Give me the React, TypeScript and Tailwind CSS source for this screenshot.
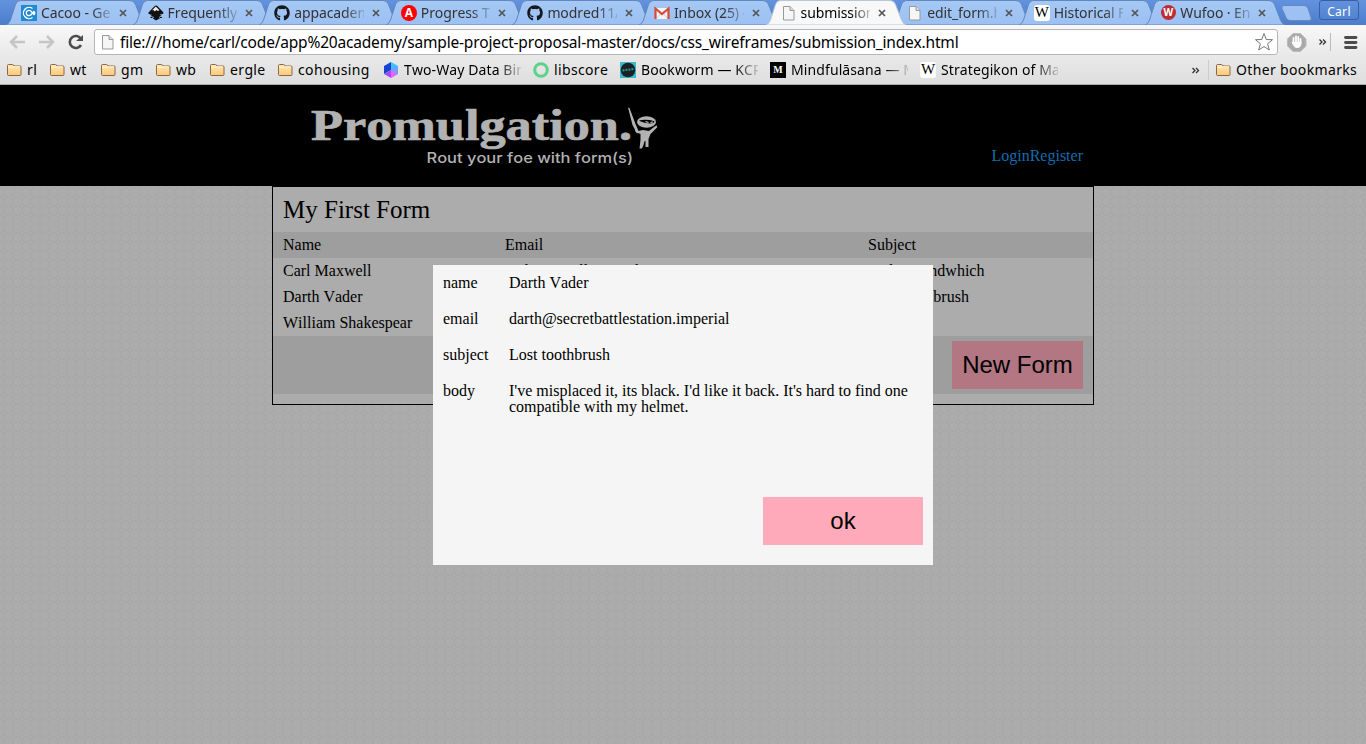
import React from "react";
import { FaGithub } from "react-icons/fa";

function Page({ s = 16 }: { s?: number }) {
  return (
    <svg width={s} height={s} viewBox="0 0 16 16" className="shrink-0">
      <path d="M2.5 1.5h6.500l4 4v9.500h-10.500z" fill="#f6f6f6" stroke="#999" />
      <path d="M9 1.500v4h4" fill="#ddd" stroke="#999" />
    </svg>
  );
}

function Folder() {
  return (
    <svg width="16" height="14" viewBox="0 0 16 14" className="shrink-0">
      <defs>
        <linearGradient id="fold" x1="0" y1="0" x2="0" y2="1">
          <stop offset="0" stopColor="#ffe9b8" />
          <stop offset="1" stopColor="#fbc877" />
        </linearGradient>
      </defs>
      <path d="M1.500 2.500q0-1 1-1h4q1 0 1.500 1.500h6q1 0 1 1v7.500q0 1-1 1h-11.500q-1 0-1-1z" fill="url(#fold)" stroke="#8f6644" />
      <path d="M2 4.500h5l1-.8h6" stroke="#fff3d2" fill="none" />
    </svg>
  );
}

function Wiki() {
  return (
    <span className="flex h-4 w-4 shrink-0 items-center justify-center rounded-[3px] bg-white font-['Liberation_Serif',serif] text-[15px] leading-none tracking-normal text-black">W</span>
  );
}

function Cacoo() {
  return (
    <svg width="16" height="16" viewBox="0 0 16 16">
      <path fill="#2189d0" d="M0 0h16v16H0z" />
      <path d="M11.500 3.600A5.600 5.600 0 1 0 11.500 12.400" fill="none" stroke="#fff" strokeWidth="1.300" />
      <path d="M10 6.200A2.700 2.700 0 1 0 10 9.800L13 6.500q1.500 1.500 0 3L10 6.200" fill="none" stroke="#fff" strokeWidth="1.300" />
    </svg>
  );
}

function Inkscape() {
  return (
    <svg width="16" height="16" viewBox="0 0 16 16">
      <path d="M8 .5Q9 .5 10 1.700L15 7q1.200 1.400-.5 2l-3 .8 2 1-2.500 1.200 1 1.200L8 15.500l-3-2 1-1.500-3.500-1 1.500-1L1 9Q-.2 8.300 1 7l5-5.300Q7 .5 8 .5z" fill="#111" />
      <path d="M7.800 1.500l3.600 3.800-1.400.7-1.600-1-1.500 1.500L5.500 5 4 5.500z" fill="#eee" />
      <path d="M2.500 12.500h2M12 12.500h2" stroke="#111" />
    </svg>
  );
}

function Gmail() {
  return (
    <svg width="16" height="16" viewBox="0 0 16 16">
      <path d="M1 3h14v11H1z" fill="#f4f4f4" />
      <path d="M3 13l4-5M13 13L9 8" stroke="#ccc" />
      <path d="M1.500 14V3.500L8 9l6.500-5.500V14" fill="none" stroke="#d64a3c" strokeWidth="2.200" />
    </svg>
  );
}

function Disc({ wufoo = false }: { wufoo?: boolean }) {
  return (
    <span className={wufoo ? "flex h-[15px] w-[15px] items-center justify-center rounded-full bg-[#bd2d32] font-['Open_Sans',sans-serif] text-[10px] font-bold tracking-normal text-white" : "flex h-4 w-4 items-center justify-center rounded-full bg-[#f00] font-['Open_Sans',sans-serif] text-[12px] font-bold tracking-normal text-white"}>
      {wufoo ? "W" : "A"}
    </span>
  );
}

const cat = <FaGithub className="h-4 w-4 text-[#16191c]" />;

const tabs: { icon: React.ReactNode; label: string; active?: boolean }[] = [
  { icon: <Cacoo />, label: "Cacoo - Gel" },
  { icon: <Inkscape />, label: "Frequently" },
  { icon: cat, label: "appacadem" },
  { icon: <Disc />, label: "Progress Tr" },
  { icon: cat, label: "modred11/" },
  { icon: <Gmail />, label: "Inbox (25) -" },
  { icon: <Page />, label: "submission", active: true },
  { icon: <Page />, label: "edit_form.h" },
  { icon: <Wiki />, label: "Historical F" },
  { icon: <Disc wufoo />, label: "Wufoo · En" },
];

function Tab({ icon, label, active }: { icon: React.ReactNode; label: string; active?: boolean }) {
  return (
    <div className={active ? "relative z-10 h-[25px] w-[126.600px] shrink-0" : "relative h-[25px] w-[126.600px] shrink-0"}>
      <svg width="144" height="25" className="absolute left-[6px] top-0">
        <defs>
          <linearGradient id="tabBlue" x1="0" y1="0" x2="0" y2="1">
            <stop offset="0" stopColor="#a5c8f5" />
            <stop offset="1" stopColor="#9bc0f2" />
          </linearGradient>
        </defs>
        <path
          d="M0 25Q3 24 4.500 20L9.500 4.500Q11 .5 14.500 .5H124Q128 .5 129.500 4.500L135.500 20Q137 24 140 25z"
          fill={active ? "#f8f8f8" : "url(#tabBlue)"}
          stroke={active ? "#b9c6da" : "#6287bd"}
          strokeWidth="1"
        />
      </svg>
      <div className="relative flex h-[25px] items-center pl-[21px]">
        <span className="flex w-4 shrink-0 justify-center">{icon}</span>
        <span className={active ? "ml-1 w-[72px] overflow-hidden whitespace-nowrap text-[14px] tracking-[-0.1px] text-black [mask-image:linear-gradient(to_right,black_72%,rgba(0,0,0,0.2))]" : "ml-1 w-[72px] overflow-hidden whitespace-nowrap text-[14px] tracking-[-0.1px] text-[#333] [mask-image:linear-gradient(to_right,black_72%,rgba(0,0,0,0.2))]"}>{label}</span>
        <svg width="8" height="8" viewBox="0 0 8 8" className="ml-[8px] shrink-0">
          <path d="M1 1l6 6M7 1L1 7" stroke="#555" strokeWidth="1.700" />
        </svg>
      </div>
    </div>
  );
}

function Mark({ icon, label, w, fade }: { icon: React.ReactNode; label: string; w: string; fade?: boolean }) {
  return (
    <div className={"flex shrink-0 items-center " + w}>
      <span className="flex w-4 shrink-0 justify-center">{icon}</span>
      <span className={fade ? "ml-[5px] w-[117px] overflow-hidden whitespace-nowrap tracking-[0.1px] [mask-image:linear-gradient(to_right,black_80%,rgba(0,0,0,0.15))]" : "ml-[5px] whitespace-nowrap tracking-[0.35px]"}>{label}</span>
    </div>
  );
}

function Ninja() {
  return (
    <svg width="32" height="42" viewBox="0 0 32 42" fill="#b2b2b2">
      <path d="M.5.500L2 1 8 17l3.500 8-2 1.500L5 18z" />
      <ellipse cx="19" cy="15" rx="9.500" ry="5.800" />
      <path d="M12 13.200q8-1 15 1l-1 1.900q-7 1.200-14-2z" fill="#000" />
      <path d="M18 14.500l3 1M23 15.500l2.500-.5" stroke="#ccc" strokeWidth="1.100" />
      <path d="M7.500 22l3 2 5-1 6 1 5-4 2.500-1.800 .8 2L23 27l-2 5v8h-3v-6l-1 .2-1 3.800-1.500 3.500H12l1-8.500v-6l-5-2z" />
    </svg>
  );
}

function Browser() {
  return (
    <header className="h-[85px] font-['Noto_Sans',sans-serif] text-[14px] text-black">
      <div className="flex h-[25px] bg-linear-to-b from-[#6393de] to-[#4c7dcd] pr-[7px]">
        {tabs.map((t) => <Tab key={t.label} {...t} />)}
        <svg width="33" height="25" className="ml-[14px] shrink-0">
          <path d="M2 8.500q-1-3 2-3h20q3 0 4 3l3 9q1 3-2 3H10q-3 0-4-3z" fill="#9dc1f2" stroke="#6589c0" />
        </svg>
        <span className="ml-auto flex h-[20px] w-[40px] items-center justify-center rounded-[3px] border border-[#395f9f] pt-[3px] text-[12px] tracking-[0.3px] text-white">Carl</span>
      </div>
      <div className="flex h-[31px] items-center bg-linear-to-b from-[#f8f8f8] to-[#e9e9e9] pt-[3px]">
        <svg width="94" height="28" className="shrink-0">
          <path d="M25 14H11M17 8l-6 6 6 6M39 14h14M47 8l6 6-6 6" fill="none" stroke="#c5c5c5" strokeWidth="2.500" />
          <path d="M81 11A6 6 0 1 0 81 17" fill="none" stroke="#4d4d4d" strokeWidth="2.600" />
          <path d="M83 7v6h-7z" fill="#4d4d4d" />
        </svg>
        <div className="flex h-[26px] w-[1184px] items-center rounded-[3px] border border-[#b5b5b5] bg-white pl-[5px] pr-[4px]">
          <Page />
          <span className="ml-[4px] whitespace-nowrap pt-[1px] text-[15.500px] tracking-[-0.190px]">file:///home/carl/code/app%20academy/sample-project-proposal-master/docs/css_wireframes/submission_index.html</span>
          <svg width="18" height="18" viewBox="0 0 18 18" className="ml-auto shrink-0"><path d="M9 .5l2.200 6 6.300.2-4.900 4 1.700 6.300L9 13.500 3.700 17l1.700-6.300-4.900-4 6.300-.2z" fill="none" stroke="#777" /></svg>
        </div>
        <svg width="88" height="28" className="shrink-0">
          <path d="M15 5.500h7.500l5.500 5.500v7l-5.500 5.500H15L9.500 18v-7z" fill="#aaa" stroke="#bbb" />
          <path d="M15.500 15v-5M18 14V8.500M20.300 14V9M22.500 15v-4" stroke="#fff" strokeWidth="1.800" strokeLinecap="round" />
          <path d="M13.500 14H23.500q0 6-4.500 6-3 0-5.500-6z" fill="#fff" />
          <path d="M41.500 11.500l2.500 2.500-2.500 2.500M45 11.500l2.500 2.500-2.500 2.500" fill="none" stroke="#333" strokeWidth="1.300" />
          <path d="M52.500 5v18" stroke="#bbb" />
          <path d="M67.500 9.500h10.500M67.500 14.500h10.500M67.500 19.500h10.500" stroke="#4c4c4c" strokeWidth="2.800" strokeLinecap="round" />
        </svg>
      </div>
      <div className="flex h-[29px] items-center border-b border-[#aaa] bg-linear-to-b from-[#e9e9e9] to-[#dedede] pb-[1px] pl-[6px]">
        <Mark icon={<Folder />} label="rl" w="w-[43px]" />
        <Mark icon={<Folder />} label="wt" w="w-[51px]" />
        <Mark icon={<Folder />} label="gm" w="w-[55px]" />
        <Mark icon={<Folder />} label="wb" w="w-[54px]" />
        <Mark icon={<Folder />} label="ergle" w="w-[68px]" />
        <Mark icon={<Folder />} label="cohousing" w="w-[106px]" />
        <Mark icon={<svg width="16" height="16"><defs><linearGradient id="cube" x1="0" y1="0" x2="0" y2="1"><stop offset="0" stopColor="#18d6ff" /><stop offset="1" stopColor="#c86bff" /></linearGradient></defs><path d="M8 0l7 4v8l-7 4z" fill="url(#cube)" /><path d="M8 0v8l-7 4V4z" fill="#1644cf" /><path d="M1 12l7-4v8z" fill="#a04bf5" /><path d="M8 8l5 5-5 3z" fill="#f65cff" /></svg>} label="Two-Way Data Bind" w="w-[150px]" fade />
        <Mark icon={<svg width="16" height="16"><circle cx="8" cy="8" r="6.300" fill="none" stroke="#5bd28a" strokeWidth="3" /></svg>} label="libscore" w="w-[87px]" />
        <Mark icon={<svg width="16" height="16"><path fill="#3db9cc" d="M0 0h16v16H0z" /><circle cx="8" cy="8" r="7.300" fill="#182326" /><path d="M2.500 8.500l11-1.500" stroke="#3a8f96" strokeWidth="2" strokeDasharray="2 1" /></svg>} label="Bookworm — KCRW" w="w-[150px]" fade />
        <Mark icon={<span className="flex h-4 w-4 items-center justify-center bg-black font-['Liberation_Serif',serif] text-[10px] font-bold text-white">M</span>} label="Mindfulāsana — M" w="w-[150px]" fade />
        <Mark icon={<Wiki />} label="Strategikon of Maurice" w="w-[150px]" fade />
        <svg width="24" height="28" className="ml-auto shrink-0"><path d="M1.500 12l2.500 2.500-2.500 2.500M5 12l2.500 2.500-2.500 2.500" fill="none" stroke="#333" strokeWidth="1.300" /><path d="M17.500 4v20" stroke="#ccc" /></svg>
        <Mark icon={<Folder />} label="Other bookmarks" w="w-[151px]" />
      </div>
    </header>
  );
}

const row = "grid h-[26px] grid-cols-[222px_363px_1fr] items-center pl-[10px]";

export default function App() {
  return (
    <div className="h-[744px] w-[1366px] overflow-hidden bg-[#acacac] font-['Liberation_Serif',serif] text-base text-black [font-kerning:none]">
      <Browser />
      <div className="flex h-[101px] justify-between bg-black pl-[310px] pr-[283px]">
        <svg width="360" height="101" className="shrink-0">
          <text x="1" y="54.500" textLength="321" lengthAdjust="spacingAndGlyphs" fill="#b2b2b2" stroke="#b2b2b2" strokeWidth="0.7" className="font-['Liberation_Serif',serif] text-[44px] font-bold">Promulgation.</text>
          <g transform="translate(317.500 22)"><Ninja /></g>
          <text x="116.500" y="78" textLength="206.500" lengthAdjust="spacingAndGlyphs" fill="#b2b2b2" className="font-['Inter',sans-serif] text-[14.500px] font-medium">Rout your foe with form(s)</text>
        </svg>
        <nav className="mt-[59px] flex text-[#126cae]"><a>Login</a><a>Register</a></nav>
      </div>
      <main className="h-[558px] bg-[radial-gradient(circle,#a8a8a8_0.500px,transparent_1px,transparent_3.800px,#a8a8a8_4.200px,#a8a8a8_4.700px,transparent_5.200px)] bg-[length:9px_9px] bg-[position:4px_2px]">
        <section className="mx-auto h-[219px] w-[822px] border border-black bg-[#acacac]">
          <h1 className="h-[45px] pl-[10px] pt-[5px] text-[25px] leading-9">My First Form</h1>
          <div className={row + " bg-[#9e9e9e]"}><span>Name</span><span>Email</span><span>Subject</span></div>
          <div className={row}><span>Carl Maxwell</span><span>carl.maxwell@gmail.com</span><span>Sudo a sandwhich</span></div>
          <div className={row}><span>Darth Vader</span><span /><span>Lost toothbrush</span></div>
          <div className={row}><span>William Shakespear</span></div>
          <div className="flex h-[58px] items-center justify-end bg-[#9e9e9e] pr-[10px]">
            <button className="h-12 w-[131px] bg-[#b27782] font-['Liberation_Sans',sans-serif] text-[24px]">New Form</button>
          </div>
        </section>
      </main>
      <div role="dialog" className="absolute left-[433px] top-[265px] flex h-[300px] w-[500px] flex-col bg-[#f5f5f5] p-[10px] leading-4">
        <dl className="grid grid-cols-[66px_1fr] gap-y-5">
          <dt>name</dt><dd>Darth Vader</dd>
          <dt>email</dt><dd>darth@secretbattlestation.imperial</dd>
          <dt>subject</dt><dd>Lost toothbrush</dd>
          <dt>body</dt><dd>I've misplaced it, its black. I'd like it back. It's hard to find one compatible with my helmet.</dd>
        </dl>
        <button className="mb-[10px] ml-auto mt-auto h-12 w-40 bg-[#ffaaba] font-['Liberation_Sans',sans-serif] text-[24px]">ok</button>
      </div>
    </div>
  );
}
